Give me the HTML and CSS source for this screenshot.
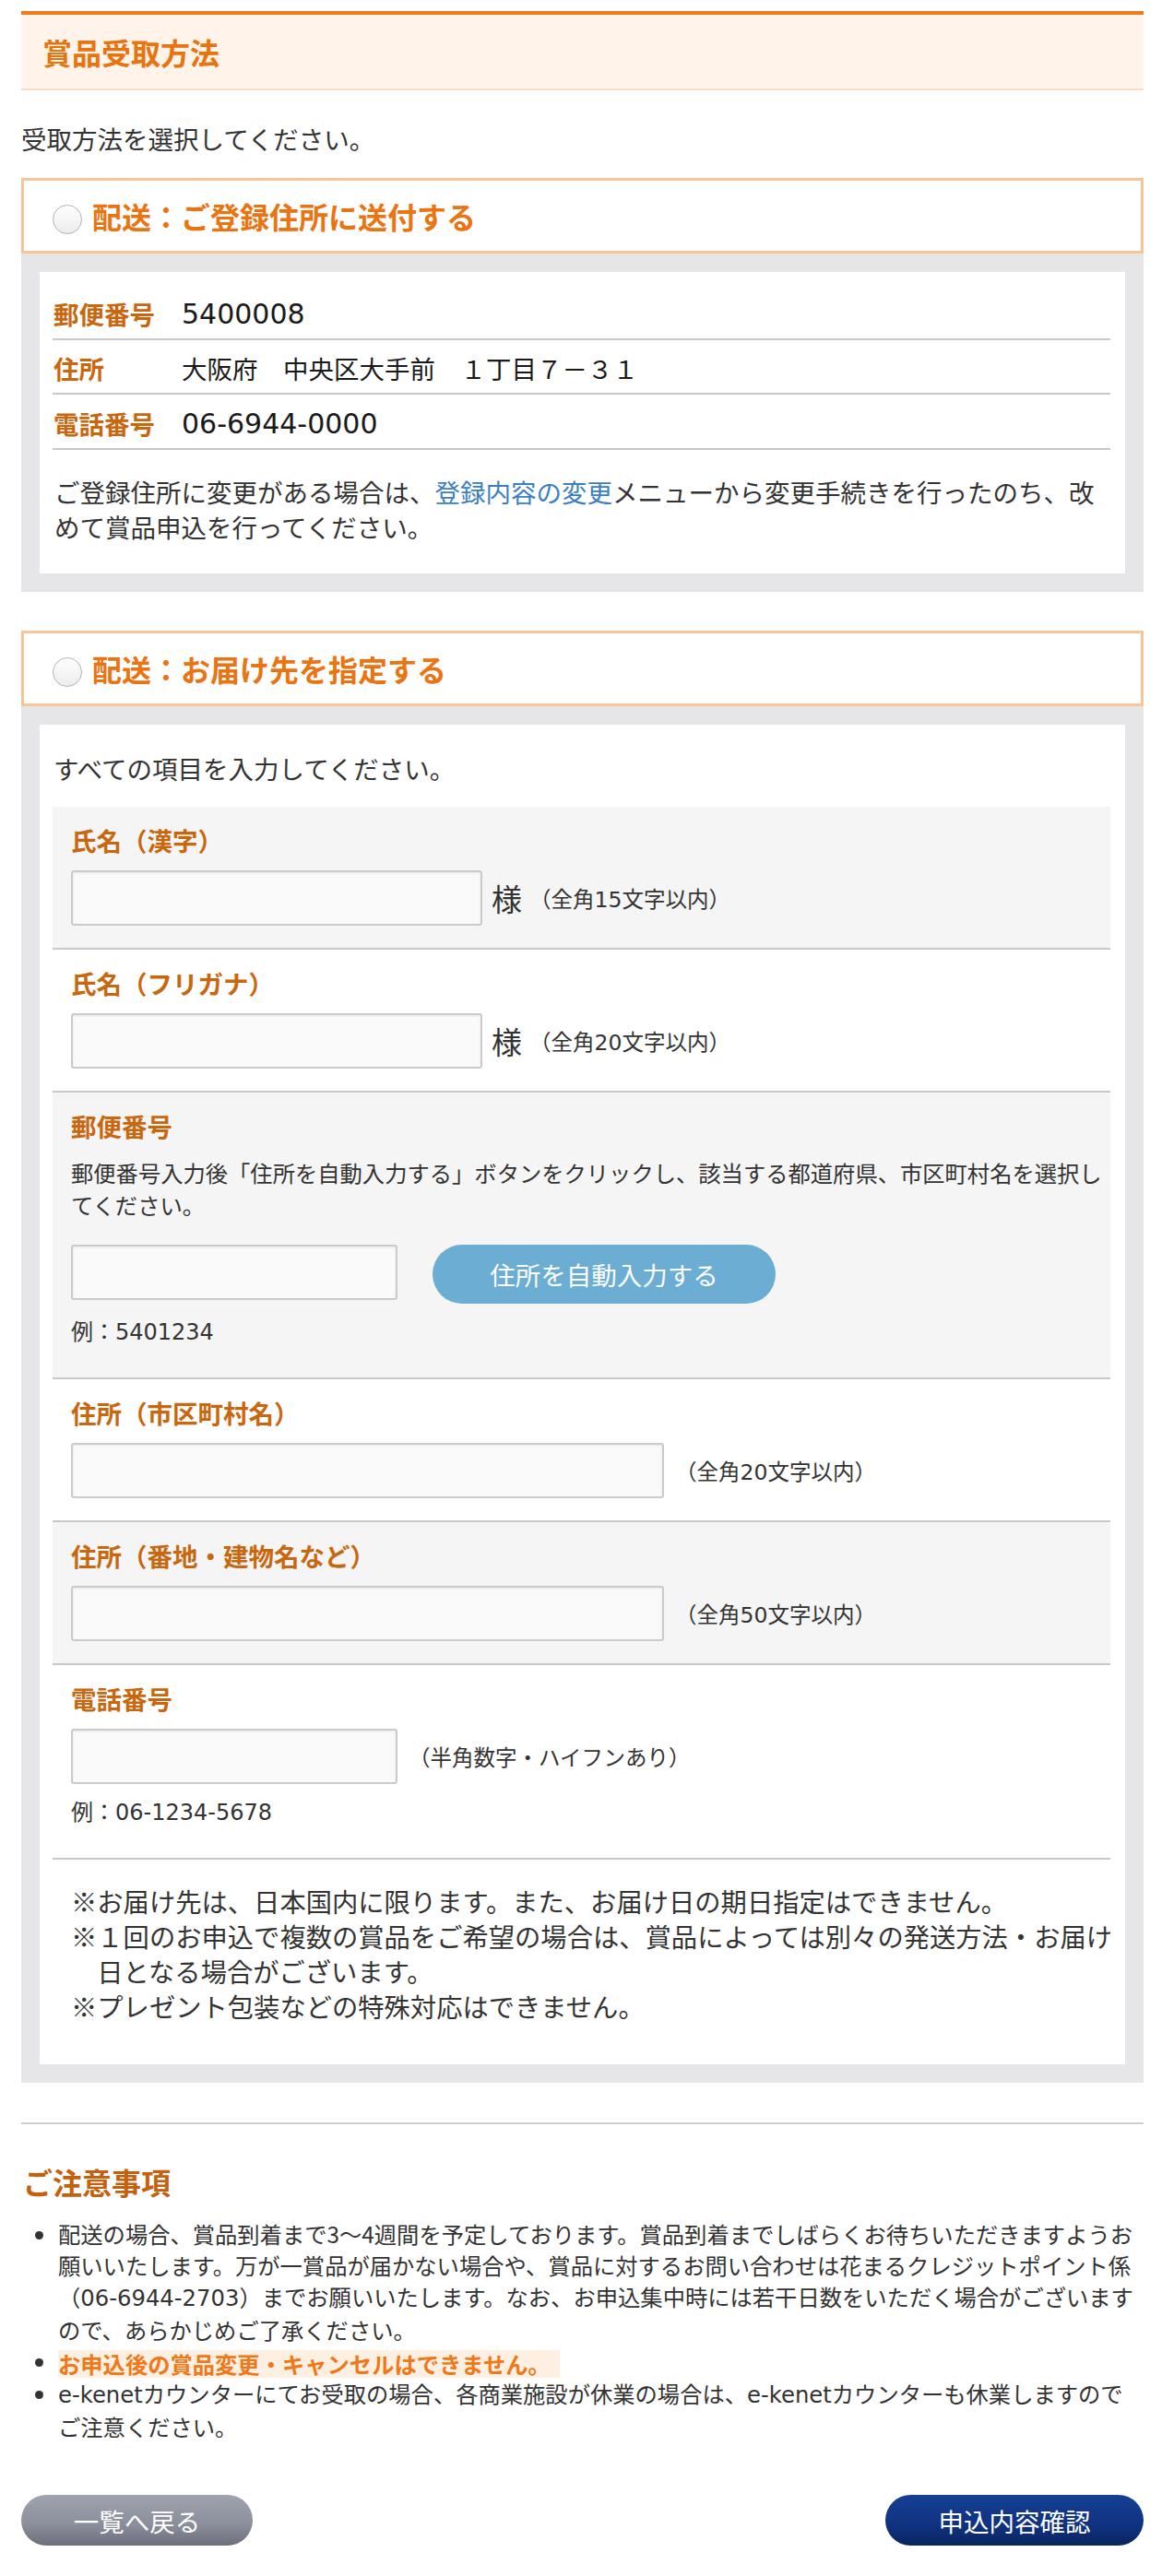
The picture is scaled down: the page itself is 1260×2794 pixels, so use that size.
FILE: index.html
```html
<!DOCTYPE html>
<html lang="ja">
<head>
<meta charset="utf-8">
<title>賞品受取方法</title>
<link rel="stylesheet" href="styles.css">
</head>
<body>
<div class="page">
  <div class="sec-head"><h2 class="sec-title">賞品受取方法</h2></div>
  <p class="lead">受取方法を選択してください。</p>

  <div class="method">
    <label class="opt"><input type="radio" name="method" class="radio"><span class="opt-title">配送：ご登録住所に送付する</span></label>
    <div class="panel">
      <div class="panel-inner reg">
        <dl class="info">
          <div class="info-row"><dt class="info-label">郵便番号</dt><dd class="info-value"><span class="lat big">5400008</span></dd></div>
          <div class="info-row"><dt class="info-label">住所</dt><dd class="info-value">大阪府　中央区大手前　１丁目７－３１</dd></div>
          <div class="info-row"><dt class="info-label">電話番号</dt><dd class="info-value"><span class="lat big">06-6944-0000</span></dd></div>
        </dl>
        <p class="reg-note">ご登録住所に変更がある場合は、<a class="link" href="#">登録内容の変更</a>メニューから変更手続きを行ったのち、改めて賞品申込を行ってください。</p>
      </div>
    </div>
  </div>

  <div class="method second">
    <label class="opt"><input type="radio" name="method" class="radio"><span class="opt-title">配送：お届け先を指定する</span></label>
    <div class="panel">
      <div class="panel-inner form">
        <p class="form-lead">すべての項目を入力してください。</p>

        <div class="frow alt">
          <div class="flabel">氏名（漢字）</div>
          <div class="fline"><input type="text" class="tinput w-name"><span class="sama">様</span><span class="limit near">（全角<span class="lat">15</span>文字以内）</span></div>
        </div>

        <div class="frow">
          <div class="flabel">氏名（フリガナ）</div>
          <div class="fline"><input type="text" class="tinput w-name"><span class="sama">様</span><span class="limit near">（全角<span class="lat">20</span>文字以内）</span></div>
        </div>

        <div class="frow alt">
          <div class="flabel">郵便番号</div>
          <p class="fdesc">郵便番号入力後「住所を自動入力する」ボタンをクリックし、該当する都道府県、市区町村名を選択してください。</p>
          <div class="fline tall"><input type="text" class="tinput w-short"><button type="button" class="auto-btn">住所を自動入力する</button></div>
          <p class="fex">例：<span class="lat">5401234</span></p>
        </div>

        <div class="frow">
          <div class="flabel">住所（市区町村名）</div>
          <div class="fline"><input type="text" class="tinput w-wide"><span class="limit">（全角<span class="lat">20</span>文字以内）</span></div>
        </div>

        <div class="frow alt">
          <div class="flabel">住所（番地・建物名など）</div>
          <div class="fline"><input type="text" class="tinput w-wide"><span class="limit">（全角<span class="lat">50</span>文字以内）</span></div>
        </div>

        <div class="frow">
          <div class="flabel">電話番号</div>
          <div class="fline"><input type="text" class="tinput w-short"><span class="limit">（半角数字・ハイフンあり）</span></div>
          <p class="fex">例：<span class="lat">06-1234-5678</span></p>
        </div>

        <ul class="fnotes">
          <li>※お届け先は、日本国内に限ります。また、お届け日の期日指定はできません。</li>
          <li>※１回のお申込で複数の賞品をご希望の場合は、賞品によっては別々の発送方法・お届け日となる場合がございます。</li>
          <li>※プレゼント包装などの特殊対応はできません。</li>
        </ul>
      </div>
    </div>
  </div>

  <hr class="divider">

  <h3 class="caution-title">ご注意事項</h3>
  <ul class="caution">
    <li>配送の場合、賞品到着まで3〜4週間を予定しております。賞品到着までしばらくお待ちいただきますようお願いいたします。万が一賞品が届かない場合や、賞品に対するお問い合わせは花まるクレジットポイント係（<span class="lat">06-6944-2703</span>）までお願いいたします。なお、お申込集中時には若干日数をいただく場合がございますので、あらかじめご了承ください。</li>
    <li><span class="warn">お申込後の賞品変更・キャンセルはできません。</span></li>
    <li><span class="lat">e-kenet</span>カウンターにてお受取の場合、各商業施設が休業の場合は、<span class="lat">e-kenet</span>カウンターも休業しますのでご注意ください。</li>
  </ul>

  <div class="actions">
    <a class="btn back" href="#">一覧へ戻る</a>
    <a class="btn confirm" href="#">申込内容確認</a>
  </div>
</div>
</body>
</html>
```

FILE: styles.css
```css
* { box-sizing: border-box; }

html, body {
  margin: 0;
  padding: 0;
  background: #ffffff;
}

body {
  font-family: "Noto Sans CJK JP", "Noto Sans", sans-serif;
  color: #333333;
  font-size: 27.5px;
}

.lat {
  font-family: "DejaVu Sans", "Noto Sans CJK JP", sans-serif;
}

.page {
  width: 1260px;
  padding: 12px 20px 38px 23px;
}

/* section header */
.sec-head {
  border-top: 4px solid #ee7a18;
  border-bottom: 2px solid #f7dcc7;
  background: #fff3ea;
}

.sec-title {
  margin: 0;
  padding-left: 23px;
  height: 80px;
  line-height: 80px;
  font-size: 32px;
  font-weight: 700;
  color: #e8740f;
}

.lead {
  margin: 33px 0 24px;
  line-height: 38px;
  color: #333333;
}

/* option header */
.method.second {
  margin-top: 42px;
}

.opt {
  display: flex;
  align-items: center;
  height: 82px;
  border: 3px solid #f7c596;
  background: #ffffff;
  padding-left: 31px;
  cursor: pointer;
}

.radio {
  -webkit-appearance: none;
  appearance: none;
  width: 32px;
  height: 32px;
  margin: 8px 11px 0 0;
  border: 1.5px solid #b4b4b4;
  border-radius: 50%;
  background: linear-gradient(#ffffff, #ececec);
  flex: none;
}

.opt-title {
  font-size: 32px;
  line-height: 40px;
  font-weight: 700;
  color: #ea7412;
}

.panel {
  background: #e6e6e8;
  padding: 20px;
}

.panel-inner {
  background: #ffffff;
}

.panel-inner.reg {
  padding: 14px 16px 32px 14px;
}

/* registered address table */
.info {
  margin: 0;
}

.info-row {
  display: flex;
  align-items: center;
  padding: 12px 0 8px;
  line-height: 37px;
  border-bottom: 2px solid #c8c8c8;
}

.info-label {
  width: 140px;
  flex: none;
  padding-left: 1px;
  font-weight: 700;
  color: #c9670f;
}

.info-value {
  margin: 0;
  color: #1a1a1a;
}

.big {
  font-size: 30px;
}

.reg-note {
  margin: 26px 0 0;
  padding-left: 2px;
  line-height: 38px;
  color: #333333;
}

.link {
  color: #3c7fc0;
  text-decoration: none;
}

/* form */
.panel-inner.form {
  padding: 28px 16px 44px 14px;
}

.form-lead {
  margin: 0 0 23px;
  padding-left: 1px;
  line-height: 38px;
  color: #333333;
}

.frow {
  padding: 17px 0 24px 20px;
  border-bottom: 2px solid #c8c8c8;
}

.frow.alt {
  background: #f5f5f5;
}

.flabel {
  line-height: 38px;
  margin-bottom: 14px;
  font-weight: 700;
  color: #c9670f;
}

.fline {
  display: flex;
  align-items: center;
  height: 60px;
}

.fline.tall {
  align-items: flex-start;
  height: 64px;
}

.tinput {
  -webkit-appearance: none;
  appearance: none;
  height: 60px;
  margin: 0;
  border: 2px solid #cbcbcb;
  border-radius: 3px;
  background: #fafafa;
  box-shadow: inset 0 1px 3px rgba(0, 0, 0, 0.08);
  font: inherit;
  flex: none;
}

.w-name { width: 446px; }
.w-short { width: 354px; }
.w-wide { width: 643px; }

.sama {
  margin-left: 10px;
  font-size: 33px;
  line-height: 40px;
  color: #333333;
}

.limit {
  margin-left: 12px;
  font-size: 23.5px;
  color: #333333;
}

.limit.near {
  margin-left: 8px;
}

.fdesc {
  margin: 6px 0 26px;
  font-size: 24.3px;
  line-height: 35px;
  color: #333333;
}

.auto-btn {
  margin-left: 38px;
  width: 372px;
  height: 64px;
  border: none;
  border-radius: 32px;
  background: #6cadd3;
  color: #ffffff;
  font-family: inherit;
  font-size: 27.5px;
  padding: 0;
}

.fex {
  margin: 12px 0 8px;
  font-size: 24px;
  line-height: 34px;
  color: #333333;
}

.fnotes {
  list-style: none;
  margin: 26px -14px 0 0;
  padding: 0 0 0 20px;
  font-size: 28.3px;
  line-height: 38px;
  color: #333333;
}

.fnotes li {
  padding-left: 1em;
  text-indent: -1em;
}

/* cautions */
.divider {
  margin: 43px 0 0;
  height: 2px;
  border: none;
  background: #cfcfcf;
}

.caution-title {
  margin: 40px 0 0;
  padding-left: 2px;
  font-size: 32px;
  line-height: 44px;
  font-weight: 700;
  color: #c5600d;
}

.caution {
  margin: 18px 0 0;
  padding-left: 40px;
  font-size: 24.3px;
  line-height: 34px;
  color: #333333;
}

.warn {
  display: inline-block;
  line-height: 30px;
  vertical-align: middle;
  padding-right: 10px;
  background: #fdf0e3;
  color: #f07818;
  font-weight: 700;
}

/* actions */
.actions {
  display: flex;
  justify-content: space-between;
  margin-top: 57px;
}

.btn {
  display: flex;
  align-items: center;
  justify-content: center;
  height: 55px;
  border-radius: 28px;
  color: #ffffff;
  text-decoration: none;
  font-size: 27.5px;
}

.btn.back {
  width: 251px;
  background: linear-gradient(#a0a3b0, #8a8d9a 60%, #6c6f7b);
}

.btn.confirm {
  width: 280px;
  background: linear-gradient(#163f93, #0f3280 60%, #0a245f);
}
```
